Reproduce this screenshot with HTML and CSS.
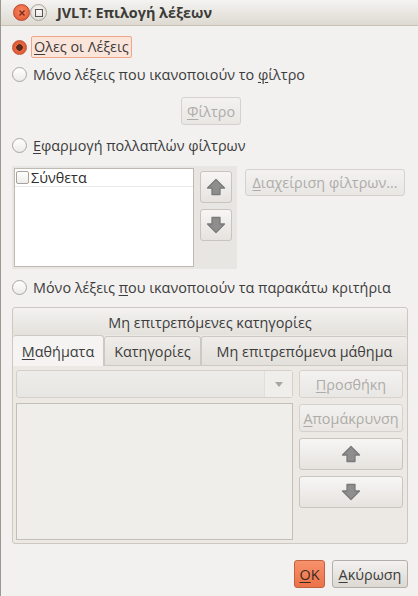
FILE: index.html
```html
<!DOCTYPE html>
<html>
<head>
<meta charset="utf-8">
<link rel="stylesheet" href="styles.css">
</head>
<body>
<div class="window">
  <div class="titlebar">
    <div class="wbtn close"><svg width="8" height="8" viewBox="0 0 8 8"><path d="M1.5 1.5L6.5 6.5M6.5 1.5L1.5 6.5" stroke="#7a2a1a" stroke-width="1.4"/></svg></div>
    <div class="wbtn max"><svg width="8" height="8" viewBox="0 0 8 8"><rect x="0.5" y="0.5" width="7" height="7" fill="none" stroke="#555" stroke-width="1"/></svg></div>
    <div class="title">JVLT: Επιλογή λέξεων</div>
  </div>
  <div class="content">
    <div class="radio-row first">
      <span class="radio checked"></span>
      <span class="label focus"><u>Ο</u>λες οι Λέξεις</span>
    </div>
    <div class="radio-row second">
      <span class="radio"></span>
      <span class="label">Μόνο λέξεις που ικανοποιούν το <u>φ</u>ίλτρο</span>
    </div>
    <div class="filter-row">
      <div class="btn disabled filter-btn"><u>Φ</u>ίλτρο</div>
    </div>
    <div class="radio-row third">
      <span class="radio"></span>
      <span class="label"><u>Ε</u>φαρμογή πολλαπλών φίλτρων</span>
    </div>
    <div class="multi">
      <div class="listframe">
        <div class="list">
          <div class="list-row"><span class="check"></span><span class="item">Σύνθετα</span></div>
        </div>
        <div class="arrows">
          <div class="btn abtn"><svg class="arr" viewBox="0 0 20 18"><path d="M10 1.5L18.5 10H14V16.5H6V10H1.5Z" fill="#8e8e8e" stroke="#7a7a7a" stroke-width="1.3" stroke-linejoin="round"/></svg></div>
          <div class="btn abtn"><svg class="arr" viewBox="0 0 20 18"><path d="M10 16.5L18.5 8H14V1.5H6V8H1.5Z" fill="#8e8e8e" stroke="#7a7a7a" stroke-width="1.3" stroke-linejoin="round"/></svg></div>
        </div>
      </div>
      <div class="btn disabled manage-btn"><u>Δ</u>ιαχείριση φίλτρων...</div>
    </div>
    <div class="radio-row fourth">
      <span class="radio"></span>
      <span class="label">Μόνο λέξεις <u>π</u>ου ικανοποιούν τα παρακάτω κριτήρια</span>
    </div>
    <div class="notebook">
      <div class="nb-header">Μη επιτρεπόμενες κατηγορίες</div>
      <div class="tabs">
        <div class="tab active"><u>Μ</u>αθήματα</div>
        <div class="tab t2">Κατηγορίες</div>
        <div class="tab t3">Μη επιτρεπόμενα μάθημα</div>
      </div>
      <div class="panel">
        <div class="left">
          <div class="combo"><span class="combo-arrow"><svg width="8" height="5" viewBox="0 0 8 5"><path d="M0 0H8L4 5Z" fill="#a8a6a2"/></svg></span></div>
          <div class="biglist"></div>
        </div>
        <div class="right">
          <div class="btn disabled rbtn"><u>Π</u>ροσθήκη</div>
          <div class="btn disabled rbtn"><u>Α</u>πομάκρυνση</div>
          <div class="btn rbtn tall"><svg class="arr" viewBox="0 0 20 18"><path d="M10 1.5L18.5 10H14V16.5H6V10H1.5Z" fill="#8e8e8e" stroke="#7a7a7a" stroke-width="1.3" stroke-linejoin="round"/></svg></div>
          <div class="btn rbtn tall"><svg class="arr" viewBox="0 0 20 18"><path d="M10 16.5L18.5 8H14V1.5H6V8H1.5Z" fill="#8e8e8e" stroke="#7a7a7a" stroke-width="1.3" stroke-linejoin="round"/></svg></div>
        </div>
      </div>
    </div>
    <div class="footer">
      <div class="btn ok"><u>O</u>K</div>
      <div class="btn cancel"><u>Α</u>κύρωση</div>
    </div>
  </div>
</div>
</body>
</html>
```
FILE: styles.css
```css
* { box-sizing: border-box; }
html, body { margin: 0; padding: 0; }
body {
  width: 418px; height: 596px; overflow: hidden;
  background: #f2f1f0;
  font-family: "Open Sans", "Noto Sans", sans-serif;
  font-size: 14.4px;
  color: #3c3c3c;
}
u { text-decoration: underline; text-underline-offset: 2px; text-decoration-thickness: 1px; }
.window {
  height: 596px;
  border-left: 1px solid #9e978f;
  background: #f2f1f0;
}
.titlebar {
  height: 26px;
  background: linear-gradient(#f4f3f1, #dedad2);
  border-bottom: 1px solid #c7c1b8;
  display: flex; align-items: center;
}
.wbtn {
  width: 17px; height: 17px; border-radius: 50%;
  display: flex; align-items: center; justify-content: center;
}
.close {
  margin-left: 12px;
  background: radial-gradient(circle at 50% 40%, #f7885f, #e2532f);
  border: 1px solid #b9482d;
}
.max {
  background: radial-gradient(circle at 50% 40%, #fbfbfa, #d8d4cd);
  border: 1px solid #aaa59d;
}
.title {
  margin-left: 10px;
  font-weight: bold; font-size: 14.4px; color: #3c3b37;
}
.content { padding: 0 10px 0 11px; }
.radio-row { display: flex; align-items: center; height: 20px; }
.radio-row.first { margin-top: 10px; height: 22px; }
.radio-row.second { margin-top: 6px; }
.radio-row.third { margin-top: 10px; }
.radio-row.fourth { margin-top: 8px; }
.radio {
  width: 15px; height: 15px; border-radius: 50%;
  border: 1px solid #aaa59f;
  background: linear-gradient(#ffffff, #ecebe9);
  margin-right: 6px; flex: none;
}
.radio.checked {
  background: radial-gradient(circle, #5a2a1c 0 3px, #e86a45 3.5px, #e0542e 7px);
  border-color: #c05535;
}
.label { white-space: nowrap; }
.label.focus {
  border: 1px solid #f0a489;
  background: #fbe5db;
  border-radius: 2px;
  padding: 0 2px; height: 22px; line-height: 20px;
  margin-left: -2px;
}
.btn {
  border: 1px solid #c8c4be;
  border-radius: 3px;
  background: linear-gradient(#f7f6f5, #e6e3df);
  display: flex; align-items: center; justify-content: center;
  white-space: nowrap;
}
.btn.disabled { color: #aeaca8; background: linear-gradient(#f3f2f0, #e9e7e4); border-color: #d5d2cd; }
.arr { width: 20px; height: 18px; display: block; }
.filter-row { margin-top: 13px; padding-left: 169px; }
.filter-btn { width: 60px; height: 28px; }
.multi { margin-top: 11px; display: flex; align-items: flex-start; }
.listframe {
  width: 225px; height: 103px;
  background: #e8e6e2;
  padding: 2px;
  display: flex; gap: 6px;
}
.list {
  width: 180px; height: 99px;
  background: #fff;
  border: 1px solid #bfb9b1;
}
.list-row {
  display: flex; align-items: center; height: 18px;
  border-bottom: 1px solid #eceae7;
}
.check {
  width: 13px; height: 13px; margin-left: 1px;
  border: 1px solid #a7a29b; border-radius: 2px;
  background: linear-gradient(#fff, #eeedeb);
}
.item { margin-left: 2px; color: #2e2e2e; }
.arrows { display: flex; flex-direction: column; gap: 6px; padding-top: 3px; }
.abtn { width: 32px; height: 32px; }
.manage-btn { margin-left: 8px; margin-top: 3px; width: 160px; height: 27px; }
.notebook {
  margin-top: 10px;
  width: 396px; height: 237px;
  border: 1px solid #cdc8c1;
  border-radius: 3px;
  background: #ece9e5;
  display: flex; flex-direction: column;
}
.nb-header {
  height: 27px; line-height: 30px; text-align: center;
  background: linear-gradient(#f3f2f0, #e4e1dc);
  border-radius: 3px 3px 0 0;
}
.tabs { display: flex; height: 30px; }
.tab {
  border: 1px solid #cdc8c1; border-bottom: none;
  border-radius: 3px 3px 0 0;
  background: linear-gradient(#efedea, #e3e0db);
  display: flex; align-items: center; justify-content: center;
  margin-top: 1px;
}
.tab.active { width: 91px; background: #f5f4f2; margin-top: 0; border-left: none; position: relative; z-index: 1; margin-bottom: -1px; height: 31px; }
.tab.t2 { width: 97px; }
.tab.t3 { flex: 1; border-right: none; }
.panel {
  flex: 1; display: flex; gap: 4px;
  padding: 4px 4px 3px 3px;
  border-top: 1px solid #cdc8c1;
}
.left { width: 277px; display: flex; flex-direction: column; gap: 5px; }
.combo {
  height: 28px; border: 1px solid #d3cfc9; border-radius: 3px;
  background: linear-gradient(#efedea, #e8e6e2);
  display: flex; justify-content: flex-end;
}
.combo-arrow {
  width: 28px; border-left: 1px solid #e2dfda;
  display: flex; align-items: center; justify-content: center;
  background: #f0eeeb;
}
.biglist { flex: 1; border: 1px solid #c4beb6; background: #f0eeea; }
.right { width: 106px; display: flex; flex-direction: column; gap: 6px; padding-left: 2px; }
.rbtn { height: 28px; }
.rbtn.tall { height: 32px; }
.footer { display: flex; justify-content: flex-end; gap: 7px; margin-top: 16px; }
.ok {
  width: 31px; height: 28px;
  background: linear-gradient(#f6926c, #ec7248);
  border-color: #c3603f;
  color: #3a2a22;
}
.cancel { width: 76px; height: 28px; background: linear-gradient(#f3f2f0, #dcd8d2); border-color: #b3aea7; }
```
